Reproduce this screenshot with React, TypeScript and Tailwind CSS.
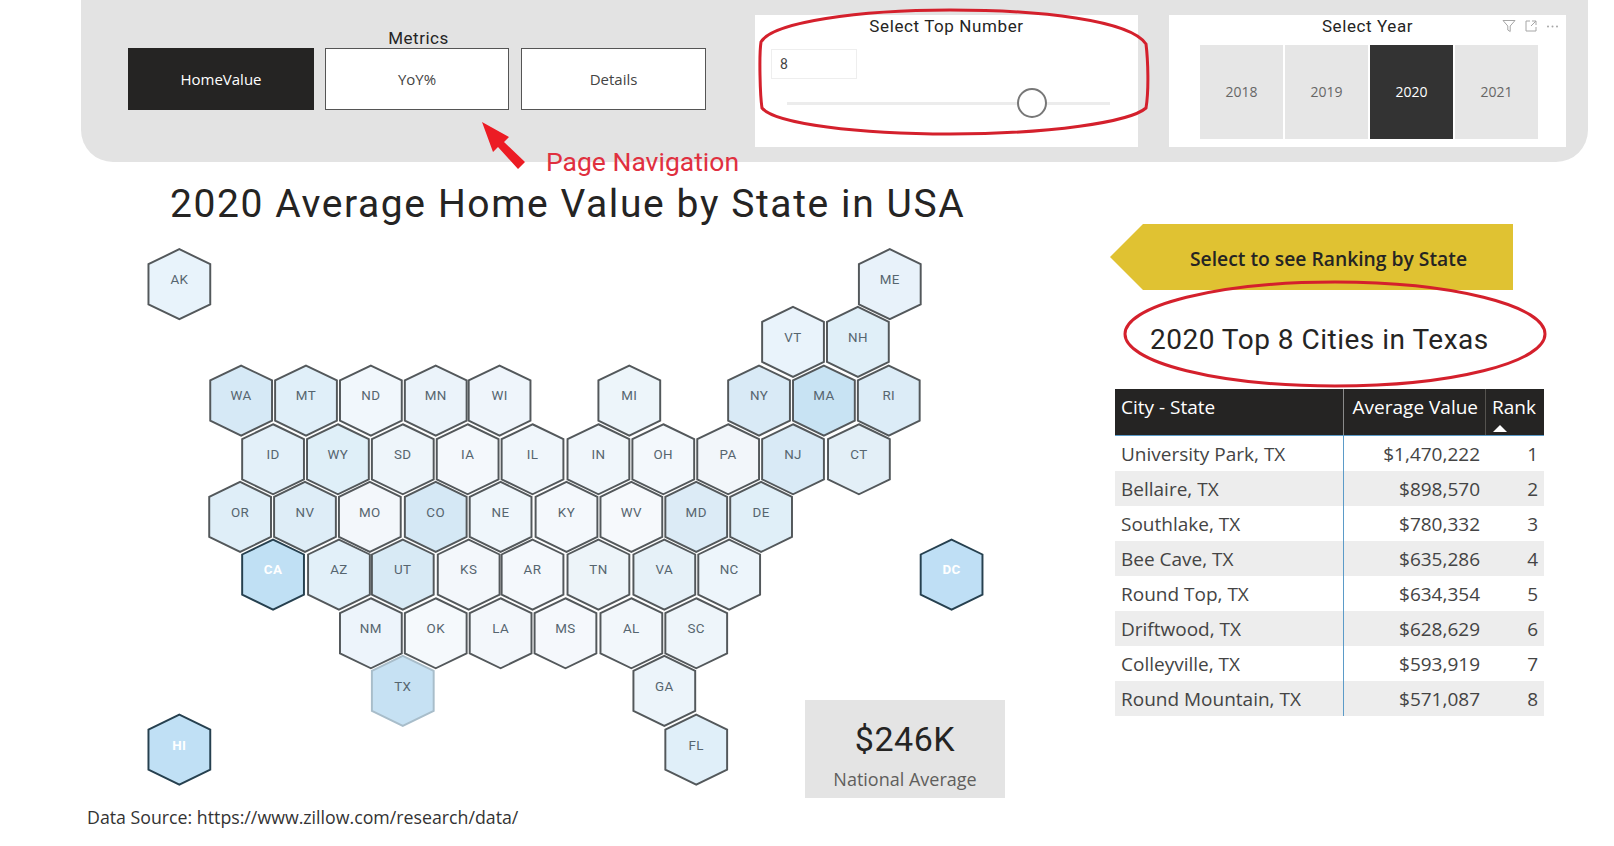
import React from 'react';

type Hex = { id: string; x: number; y: number; fill: string };

// state tiles, centres are in the map's own viewBox units
const hexes: Hex[] = [
    { id: 'AK', x: 174, y: 276, fill: '#e8f3fb' },
    { id: 'ME', x: 864, y: 276, fill: '#e8f2fa' },
    { id: 'VT', x: 770, y: 332, fill: '#e9f3fb' },
    { id: 'NH', x: 833, y: 332, fill: '#e0eff8' },
    { id: 'WA', x: 234, y: 389, fill: '#d6e9f6' },
    { id: 'MT', x: 297, y: 389, fill: '#e0eff9' },
    { id: 'ND', x: 360, y: 389, fill: '#f1f7fc' },
    { id: 'MN', x: 423, y: 389, fill: '#ebf3fa' },
    { id: 'WI', x: 485, y: 389, fill: '#eff5fb' },
    { id: 'MI', x: 611, y: 389, fill: '#edf5fa' },
    { id: 'NY', x: 737, y: 389, fill: '#d9eaf6' },
    { id: 'MA', x: 800, y: 389, fill: '#c8e3f3' },
    { id: 'RI', x: 863, y: 389, fill: '#dcecf7' },
    { id: 'ID', x: 265, y: 446, fill: '#e3f0f9' },
    { id: 'WY', x: 328, y: 446, fill: '#dfeff8' },
    { id: 'SD', x: 391, y: 446, fill: '#eef5fa' },
    { id: 'IA', x: 454, y: 446, fill: '#f4f8fc' },
    { id: 'IL', x: 517, y: 446, fill: '#f0f6fb' },
    { id: 'IN', x: 581, y: 446, fill: '#f0f6fb' },
    { id: 'OH', x: 644, y: 446, fill: '#f3f8fc' },
    { id: 'PA', x: 707, y: 446, fill: '#f2f6fa' },
    { id: 'NJ', x: 770, y: 446, fill: '#d9eaf6' },
    { id: 'CT', x: 834, y: 446, fill: '#e3eff7' },
    { id: 'OR', x: 233, y: 502, fill: '#dfeef8' },
    { id: 'NV', x: 296, y: 502, fill: '#deedf7' },
    { id: 'MO', x: 359, y: 502, fill: '#f3f7fb' },
    { id: 'CO', x: 423, y: 502, fill: '#d5e8f5' },
    { id: 'NE', x: 486, y: 502, fill: '#eff6fb' },
    { id: 'KY', x: 550, y: 502, fill: '#f4f8fc' },
    { id: 'WV', x: 613, y: 502, fill: '#f6f9fc' },
    { id: 'MD', x: 676, y: 502, fill: '#dcebf6' },
    { id: 'DE', x: 739, y: 502, fill: '#e0eff8' },
    { id: 'CA', x: 265, y: 558, fill: '#c0e0f4' },
    { id: 'AZ', x: 329, y: 558, fill: '#e2f0f9' },
    { id: 'UT', x: 391, y: 558, fill: '#d8eaf5' },
    { id: 'KS', x: 455, y: 558, fill: '#f3f7fb' },
    { id: 'AR', x: 517, y: 558, fill: '#f4f8fc' },
    { id: 'TN', x: 581, y: 558, fill: '#edf4f9' },
    { id: 'VA', x: 645, y: 558, fill: '#e6f1f8' },
    { id: 'NC', x: 708, y: 558, fill: '#edf5fb' },
    { id: 'DC', x: 924, y: 558, fill: '#bfdff5' },
    { id: 'NM', x: 360, y: 615, fill: '#edf4fb' },
    { id: 'OK', x: 423, y: 615, fill: '#f5f9fc' },
    { id: 'LA', x: 486, y: 615, fill: '#f3f7fb' },
    { id: 'MS', x: 549, y: 615, fill: '#f5f8fc' },
    { id: 'AL', x: 613, y: 615, fill: '#f2f7fb' },
    { id: 'SC', x: 676, y: 615, fill: '#eef5fa' },
    { id: 'GA', x: 645, y: 671, fill: '#ecf4fa' },
    { id: 'TX', x: 391, y: 671, fill: '#c6e1f3' },
    { id: 'FL', x: 676, y: 728, fill: '#e0eff9' },
    { id: 'HI', x: 174, y: 728, fill: '#c0e0f5' },
];

const rows = [
    ['University Park, TX', '$1,470,222', '1'],
    ['Bellaire, TX', '$898,570', '2'],
    ['Southlake, TX', '$780,332', '3'],
    ['Bee Cave, TX', '$635,286', '4'],
    ['Round Top, TX', '$634,354', '5'],
    ['Driftwood, TX', '$628,629', '6'],
    ['Colleyville, TX', '$593,919', '7'],
    ['Round Mountain, TX', '$571,087', '8'],
];

const years = ['2018', '2019', '2020', '2021'];
const din = "font-['Roboto',sans-serif]";
const segoe = "font-['Open_Sans',sans-serif]";

const HexMap = () => (
    <svg viewBox="130 235 840 540" className="block w-[865px] h-[556px]">
        {hexes.map(h => {
            const strong = h.id === 'CA' || h.id === 'HI' || h.id === 'DC';
            const stroke = strong ? '#26404f' : h.id === 'TX' ? '#a8bdca' : '#53585b';
            return (
                <g key={h.id}>
                    <polygon
                        points={`${h.x},${h.y - 34} ${h.x + 30},${h.y - 19.5} ${h.x + 30},${h.y + 19.5} ${h.x},${h.y + 34} ${h.x - 30},${h.y + 19.5} ${h.x - 30},${h.y - 19.5}`}
                        fill={h.fill}
                        stroke={stroke}
                        strokeWidth={1.9}
                    />
                    <text
                        x={h.x}
                        y={h.y - 3.5}
                        textAnchor="middle"
                        dominantBaseline="middle"
                        fontFamily="Roboto, sans-serif"
                        fontSize={13}
                        fontWeight={strong ? 700 : 400}
                        letterSpacing={0.4}
                        fill={strong ? '#ffffff' : '#56656f'}
                    >
                        {h.id}
                    </text>
                </g>
            );
        })}
    </svg>
);

const VisualIcons = () => (
    <div className="absolute top-[4px] right-[7px] flex items-center gap-[9px] text-[#a6a6a6]">
        <svg className="w-[14px] h-[14px]" viewBox="0 0 14 14" fill="none" stroke="currentColor" strokeWidth="1">
            <path d="M1 1.5h12L8.2 7v5.5L5.8 11V7z" />
        </svg>
        <svg className="w-[12px] h-[12px]" viewBox="0 0 12 12" fill="none" stroke="currentColor" strokeWidth="1">
            <path d="M5 1H1v10h10V7M7 1h4v4M11 1L6 6" />
        </svg>
        <svg className="w-[13px] h-[13px]" viewBox="0 0 13 13" fill="currentColor">
            <circle cx="2" cy="6.5" r="1" />
            <circle cx="6.5" cy="6.5" r="1" />
            <circle cx="11" cy="6.5" r="1" />
        </svg>
    </div>
);

export default function App() {
    return (
        <div className={`relative w-[1614px] h-[846px] overflow-hidden bg-white ${din}`}>
            <div className="ml-[81px] w-[1507px] h-[162px] flex items-start pl-[47px] bg-[#e3e3e3] rounded-b-[32px]">
                <div className="pt-[28px] w-[578px]">
                    <div className="h-[20px] pl-[3px] text-center text-[17px] leading-[20px] tracking-[0.5px] text-[#252423]">Metrics</div>
                    <div className={`flex text-[15px] ${segoe}`}>
                        <div className="w-[186px] h-[62px] flex items-center justify-center bg-[#252423] text-white">HomeValue</div>
                        <div className="ml-[11px] w-[184px] h-[62px] flex items-center justify-center bg-white border border-[#555] text-[#444]">YoY%</div>
                        <div className="ml-[12px] w-[185px] h-[62px] flex items-center justify-center bg-white border border-[#555] text-[#444]">Details</div>
                    </div>
                </div>

                <div className="ml-[49px] mt-[15px] w-[383px] h-[132px] bg-white pt-[1px]">
                    <div className="text-center text-[17px] leading-[20px] tracking-[0.6px] text-[#252423]">Select Top Number</div>
                    <div className="ml-[16px] mt-[13px] w-[86px] h-[30px] border border-[#eeeeee] flex items-center pl-[8px] text-[14px] text-[#444]">8</div>
                    <div className="relative ml-[32px] mt-[23px] w-[323px] h-[3px] bg-[#ececec]">
                        <div className="absolute left-[230px] top-[-14px] w-[30px] h-[30px] rounded-full bg-white border-2 border-[#777]"></div>
                    </div>
                </div>

                <div className="relative ml-[31px] mt-[15px] w-[397px] h-[132px] bg-white pt-[1px]">
                    <VisualIcons />
                    <div className="text-center text-[17px] leading-[20px] tracking-[0.6px] text-[#252423]">Select Year</div>
                    <div className={`ml-[31px] mt-[9px] flex gap-[2px] text-[14px] ${segoe}`}>
                        {years.map(y => (
                            <div
                                key={y}
                                className={y === '2020'
                                    ? 'w-[83px] h-[94px] pb-[2px] flex items-center justify-center bg-[#333333] text-white'
                                    : 'w-[83px] h-[94px] pb-[2px] flex items-center justify-center bg-[#e6e6e6] text-[#666]'}
                            >
                                {y}
                            </div>
                        ))}
                    </div>
                </div>
            </div>

            <div className="flex">
                <div className="w-[1110px] shrink-0">
                    <h1 className="pl-[170px] h-[80px] pt-[17px] text-[39px] leading-[50px] tracking-[1.6px] font-normal text-[#252423] whitespace-nowrap">
                        2020 Average Home Value by State in USA
                    </h1>
                    <div className="relative ml-[134px]">
                        <HexMap />
                        <div className="absolute left-[671px] top-[458px] w-[200px] h-[98px] bg-[#e4e4e4] flex flex-col items-center pt-[18px]">
                            <div className="text-[34px] leading-[42px] tracking-[0.5px] text-[#252423]">$246K</div>
                            <div className={`mt-[7px] text-[18px] leading-[24px] text-[#605e5c] ${segoe}`}>National Average</div>
                        </div>
                    </div>
                    <div className={`pl-[87px] mt-[6px] text-[17.75px] leading-[26px] text-[#333] whitespace-nowrap ${segoe}`}>
                        Data Source: https://www.zillow.com/research/data/
                    </div>
                </div>

                <div className="w-[434px] pt-[62px]">
                    <div className={`w-[403px] h-[66px] pl-[34px] pt-[4px] flex items-center justify-center bg-[#e0c232] [clip-path:polygon(33px_0,100%_0,100%_100%,33px_100%,0_50%)] text-[19.3px] font-semibold text-[#252423] ${segoe}`}>
                        Select to see Ranking by State
                    </div>
                    <div className="h-[99px] pl-[40px] flex items-center text-[28px] tracking-[0.5px] text-[#252423] whitespace-nowrap">
                        2020 Top 8 Cities in Texas
                    </div>
                    <div className={`ml-[5px] w-[429px] ${segoe}`}>
                        <div className="grid grid-cols-[229px_142px_58px] h-[47px] bg-[#252423] text-white text-[19px] border-b border-[#5b9bc8]">
                            <div className="pl-[6px] pt-[4px] border-r border-[#8a8a8a]">City - State</div>
                            <div className="pr-[7px] pt-[4px] text-right border-r border-[#55534f]">Average Value</div>
                            <div className="relative pl-[6px] pt-[4px]">
                                Rank
                                <div className="absolute left-[7px] bottom-[3px] w-0 h-0 border-x-[7px] border-x-transparent border-b-[7px] border-b-white"></div>
                            </div>
                        </div>
                        {rows.map((r, i) => (
                            <div
                                key={r[0]}
                                className={i % 2 === 1
                                    ? 'grid grid-cols-[229px_142px_58px] h-[35px] items-center bg-[#ededed] text-[19px] text-[#444]'
                                    : 'grid grid-cols-[229px_142px_58px] h-[35px] items-center bg-white text-[19px] text-[#444]'}
                            >
                                <div className="h-full flex items-center pl-[6px] pt-[2px] border-r border-[#5b9bc8] whitespace-nowrap">{r[0]}</div>
                                <div className="pr-[6px] pt-[2px] text-right">{r[1]}</div>
                                <div className="pr-[6px] pt-[2px] text-right">{r[2]}</div>
                            </div>
                        ))}
                    </div>
                </div>
            </div>

            {/* hand drawn annotations on top of the report */}
            <svg className="absolute left-0 top-0 w-[1614px] h-[400px] pointer-events-none" viewBox="0 0 1614 400" fill="none">
                <path d="M761 42C772 22 860 10 950 10C1040 10 1130 20 1146 44C1148 60 1149 90 1146 108C1130 122 1050 134 950 134C860 134 775 124 762 108C760 95 759 55 761 42Z" stroke="#d4202c" strokeWidth="3" />
                <ellipse cx="1335" cy="334" rx="210" ry="52" stroke="#d4202c" strokeWidth="3" />
                <path d="M482 122L509 137L504 142L525 162L518 169L498 147L493 152Z" fill="#ec1c24" />
            </svg>
            <div className="absolute left-[546px] top-[144px] text-[26.5px] leading-[36px] text-[#e0303f] whitespace-nowrap">Page Navigation</div>
        </div>
    );
}
